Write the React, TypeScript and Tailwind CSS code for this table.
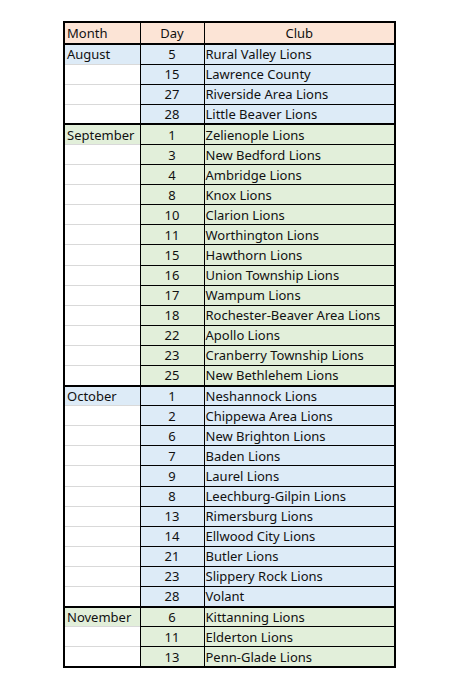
type Row = { day: number; club: string };
type Group = { month: string; tone: "blue" | "green"; rows: Row[] };

const groups: Group[] = [
  {
    month: "August",
    tone: "blue",
    rows: [
      { day: 5, club: "Rural Valley Lions" },
      { day: 15, club: "Lawrence County" },
      { day: 27, club: "Riverside Area Lions" },
      { day: 28, club: "Little Beaver Lions" },
    ],
  },
  {
    month: "September",
    tone: "green",
    rows: [
      { day: 1, club: "Zelienople Lions" },
      { day: 3, club: "New Bedford Lions" },
      { day: 4, club: "Ambridge Lions" },
      { day: 8, club: "Knox Lions" },
      { day: 10, club: "Clarion Lions" },
      { day: 11, club: "Worthington Lions" },
      { day: 15, club: "Hawthorn Lions" },
      { day: 16, club: "Union Township Lions" },
      { day: 17, club: "Wampum Lions" },
      { day: 18, club: "Rochester-Beaver Area Lions" },
      { day: 22, club: "Apollo Lions" },
      { day: 23, club: "Cranberry Township Lions" },
      { day: 25, club: "New Bethlehem Lions" },
    ],
  },
  {
    month: "October",
    tone: "blue",
    rows: [
      { day: 1, club: "Neshannock Lions" },
      { day: 2, club: "Chippewa Area Lions" },
      { day: 6, club: "New Brighton Lions" },
      { day: 7, club: "Baden Lions" },
      { day: 9, club: "Laurel Lions" },
      { day: 8, club: "Leechburg-Gilpin Lions" },
      { day: 13, club: "Rimersburg Lions" },
      { day: 14, club: "Ellwood City Lions" },
      { day: 21, club: "Butler Lions" },
      { day: 23, club: "Slippery Rock Lions" },
      { day: 28, club: "Volant" },
    ],
  },
  {
    month: "November",
    tone: "green",
    rows: [
      { day: 6, club: "Kittanning Lions" },
      { day: 11, club: "Elderton Lions" },
      { day: 13, club: "Penn-Glade Lions" },
    ],
  },
];

export default function App() {
  return (
    <div className="min-h-[687px] bg-white pt-[21px] pl-[63px] text-[13px] text-[#111] [font-family:'Noto_Sans',sans-serif]">
      <table className="border-collapse border-2 border-black">
        <thead>
          <tr className="h-[22px] bg-[#fce4d6]">
            <th className="w-[76px] border-b-2 border-r border-black px-[2px] text-left font-normal leading-none">Month</th>
            <th className="w-[64px] border-b-2 border-r border-black text-center font-normal leading-none">Day</th>
            <th className="w-[191px] border-b-2 border-black text-center font-normal leading-none">Club</th>
          </tr>
        </thead>
        <tbody>
          {groups.map((g) => {
            const bg = g.tone === "blue" ? "bg-[#ddebf7]" : "bg-[#e2efda]";
            return g.rows.map((r, i) => (
              <tr
                key={g.month + i}
                className={i === 0 ? "h-[20.1px] border-t-2 border-black" : "h-[20.1px]"}
              >
                <td
                  className={
                    i === 0
                      ? `${bg} border-r border-black px-[2px] pt-[1px] leading-none`
                      : "border-r border-t border-r-black border-t-[#d9d9d9] bg-white px-[2px] leading-none"
                  }
                >
                  {i === 0 ? g.month : ""}
                </td>
                <td className={`${bg} border border-black pt-[1px] text-center leading-none`}>{r.day}</td>
                <td className={`${bg} border border-black px-[1px] pt-[1px] leading-none`}>{r.club}</td>
              </tr>
            ));
          })}
        </tbody>
      </table>
    </div>
  );
}
